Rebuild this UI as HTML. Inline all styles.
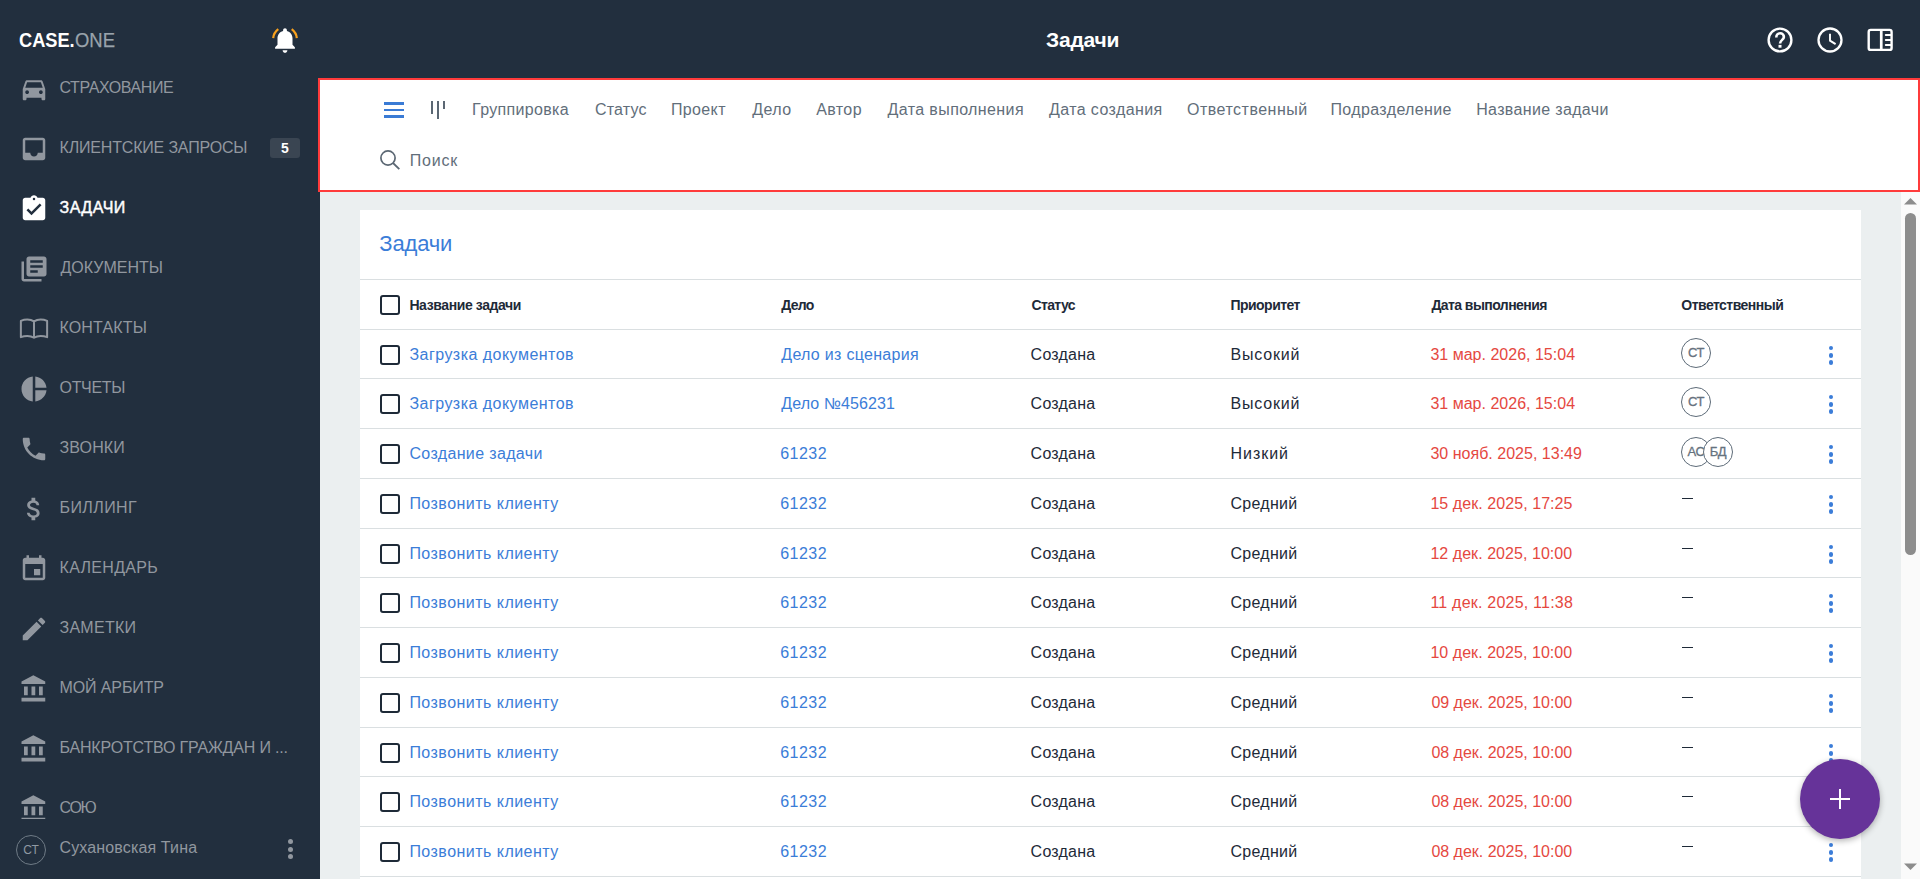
<!DOCTYPE html>
<html><head><meta charset="utf-8"><style>
html,body{margin:0;padding:0}
body{width:1920px;height:879px;overflow:hidden;position:relative;background:#ebeff0;font-family:"Liberation Sans",sans-serif}
.t{position:absolute;white-space:nowrap;line-height:1}
.ic{position:absolute;width:30px;height:30px}
.ic svg{display:block}
.cb{position:absolute;left:380px;width:16px;height:16px;border:2px solid #1e2a38;border-radius:3px}
.av{position:absolute;width:28px;height:28px;border:1px solid #5d6b78;border-radius:50%;background:#fff;color:#66727e;font-size:13px;font-weight:400;line-height:28px;text-align:center;letter-spacing:-0.4px;-webkit-text-stroke:0.3px #66727e}
.keb{position:absolute;left:1828.8px;width:5px;height:20px}
.keb i{display:block;width:4.6px;height:4.6px;border-radius:50%;background:#3b7dd8;margin-bottom:2.9px}
</style></head><body>
<div style="position:absolute;left:0;top:0;width:320px;height:879px;background:#222f3e"></div>
<div style="position:absolute;left:320px;top:0;width:1600px;height:80px;background:#222f3e"></div>
<div style="position:absolute;left:318px;top:78px;width:1598px;height:110px;border:2px solid #ff3b3b;background:#fff"></div>
<div style="position:absolute;left:1901px;top:192px;width:19px;height:687px;background:#fafafa"></div>
<div style="position:absolute;left:1905px;top:213px;width:11px;height:342px;border-radius:6px;background:#8c8c8c"></div>
<svg style="position:absolute;left:1904px;top:197px" width="13" height="8"><path d="M0 7.5L6.5 1 13 7.5z" fill="#8c8c8c"/></svg>
<svg style="position:absolute;left:1904px;top:863px" width="13" height="8"><path d="M0 .5L6.5 7 13 .5z" fill="#8c8c8c"/></svg>
<div style="position:absolute;left:360px;top:210px;width:1501px;height:700px;background:#fff"></div>
<div style="position:absolute;left:360px;top:279px;width:1501px;height:1px;background:#dadfe1"></div><div style="position:absolute;left:360px;top:329px;width:1501px;height:1px;background:#dadfe1"></div><div class="cb" style="top:295px"></div><div style="position:absolute;left:360px;top:378px;width:1501px;height:1px;background:#dadfe1"></div><div class="cb" style="top:345px"></div><div class="av" style="left:1681px;top:338px">СТ</div><div class="keb" style="top:345.50px"><i></i><i></i><i></i></div><div style="position:absolute;left:360px;top:428px;width:1501px;height:1px;background:#dadfe1"></div><div class="cb" style="top:394px"></div><div class="av" style="left:1681px;top:387px">СТ</div><div class="keb" style="top:394.50px"><i></i><i></i><i></i></div><div style="position:absolute;left:360px;top:478px;width:1501px;height:1px;background:#dadfe1"></div><div class="cb" style="top:444px"></div><div class="av" style="left:1681px;top:437px">АС</div><div class="av" style="left:1703px;top:437px">БД</div><div class="keb" style="top:444.50px"><i></i><i></i><i></i></div><div style="position:absolute;left:360px;top:528px;width:1501px;height:1px;background:#dadfe1"></div><div class="cb" style="top:494px"></div><div style="position:absolute;left:1682px;top:498px;width:11px;height:1px;background:#1e2a38"></div><div class="keb" style="top:494.50px"><i></i><i></i><i></i></div><div style="position:absolute;left:360px;top:577px;width:1501px;height:1px;background:#dadfe1"></div><div class="cb" style="top:544px"></div><div style="position:absolute;left:1682px;top:548px;width:11px;height:1px;background:#1e2a38"></div><div class="keb" style="top:544.50px"><i></i><i></i><i></i></div><div style="position:absolute;left:360px;top:627px;width:1501px;height:1px;background:#dadfe1"></div><div class="cb" style="top:593px"></div><div style="position:absolute;left:1682px;top:597px;width:11px;height:1px;background:#1e2a38"></div><div class="keb" style="top:593.50px"><i></i><i></i><i></i></div><div style="position:absolute;left:360px;top:677px;width:1501px;height:1px;background:#dadfe1"></div><div class="cb" style="top:643px"></div><div style="position:absolute;left:1682px;top:647px;width:11px;height:1px;background:#1e2a38"></div><div class="keb" style="top:643.50px"><i></i><i></i><i></i></div><div style="position:absolute;left:360px;top:727px;width:1501px;height:1px;background:#dadfe1"></div><div class="cb" style="top:693px"></div><div style="position:absolute;left:1682px;top:697px;width:11px;height:1px;background:#1e2a38"></div><div class="keb" style="top:693.50px"><i></i><i></i><i></i></div><div style="position:absolute;left:360px;top:776px;width:1501px;height:1px;background:#dadfe1"></div><div class="cb" style="top:743px"></div><div style="position:absolute;left:1682px;top:747px;width:11px;height:1px;background:#1e2a38"></div><div class="keb" style="top:743.50px"><i></i><i></i><i></i></div><div style="position:absolute;left:360px;top:826px;width:1501px;height:1px;background:#dadfe1"></div><div class="cb" style="top:792px"></div><div style="position:absolute;left:1682px;top:796px;width:11px;height:1px;background:#1e2a38"></div><div class="keb" style="top:792.50px"><i></i><i></i><i></i></div><div style="position:absolute;left:360px;top:876px;width:1501px;height:1px;background:#dadfe1"></div><div class="cb" style="top:842px"></div><div style="position:absolute;left:1682px;top:846px;width:11px;height:1px;background:#1e2a38"></div><div class="keb" style="top:842.50px"><i></i><i></i><i></i></div>
<svg style="position:absolute;left:268px;top:24px" width="34" height="32" viewBox="268 24 34 32">
<path d="M285 28.2c-1.1 0-1.9.8-1.9 1.9v.9c-3.6.9-5.6 3.9-5.6 7.4v6.3l-2.4 2.5v1.6h19.8v-1.6l-2.4-2.5v-6.3c0-3.5-2-6.5-5.6-7.4v-.9c0-1.1-.8-1.9-1.9-1.9z" fill="#fff"/>
<path d="M282.6 50.2h4.8c0 1.4-1.1 2.6-2.4 2.6s-2.4-1.2-2.4-2.6z" fill="#fff"/>
<path d="M278.3 29.2c-2.9 2.2-4.8 5.4-5.1 8.9" fill="none" stroke="#f7a01d" stroke-width="2.2"/>
<path d="M291.7 29.2c2.9 2.2 4.8 5.4 5.1 8.9" fill="none" stroke="#f7a01d" stroke-width="2.2"/>
</svg>
<svg style="position:absolute;left:1760px;top:20px" width="140" height="40" viewBox="1760 20 140 40">
<circle cx="1780" cy="40" r="11.4" fill="none" stroke="#fff" stroke-width="2.4"/>
<path d="M1776.3 37.4c0-2.4 1.6-4.1 3.8-4.1s3.8 1.6 3.8 3.7c0 2.8-3.8 3.1-3.8 6.5" fill="none" stroke="#fff" stroke-width="2.6"/>
<rect x="1778.5" y="44.9" width="3" height="2.8" fill="#fff"/>
<circle cx="1830" cy="40" r="11.5" fill="none" stroke="#fff" stroke-width="2.3"/>
<path d="M1830 33.8v6.8l5.6 3.5" fill="none" stroke="#fff" stroke-width="1.9"/>
<rect x="1868.7" y="29.9" width="22.9" height="20" rx="2" fill="none" stroke="#fff" stroke-width="2.4"/>
<rect x="1879.9" y="30" width="2.7" height="20" fill="#fff"/>
<path d="M1885.8 34.9h5M1885.8 39.9h5M1885.8 44.9h5" stroke="#fff" stroke-width="2" stroke-linecap="round"/>
</svg>
<div style="position:absolute;left:384px;top:102.3px;width:20px;height:2.5px;background:#3a7bd5"></div>
<div style="position:absolute;left:384px;top:108.9px;width:20px;height:2.5px;background:#3a7bd5"></div>
<div style="position:absolute;left:384px;top:115.3px;width:20px;height:2.5px;background:#3a7bd5"></div>
<div style="position:absolute;left:430.5px;top:101px;width:2.3px;height:12.6px;background:#5b6773"></div>
<div style="position:absolute;left:436.7px;top:101px;width:2.3px;height:17.6px;background:#5b6773"></div>
<div style="position:absolute;left:443.2px;top:101px;width:2.3px;height:7.6px;background:#5b6773"></div>
<svg style="position:absolute;left:376px;top:146px" width="28" height="28" viewBox="376 146 28 28">
<circle cx="388" cy="158" r="7.1" fill="none" stroke="#5b6773" stroke-width="1.7"/>
<path d="M393 163l6.3 6.2" stroke="#5b6773" stroke-width="1.8"/>
</svg>

<div class="ic" style="left:19px;top:74px"><svg width="30" height="30" viewBox="0 0 24 24"><path d="M18.92 6.01C18.72 5.42 18.16 5 17.5 5h-11c-.66 0-1.21.42-1.42 1.01L3 12v8c0 .55.45 1 1 1h1c.55 0 1-.45 1-1v-1h12v1c0 .55.45 1 1 1h1c.55 0 1-.45 1-1v-8l-2.08-5.99zM6.5 16c-.83 0-1.5-.67-1.5-1.5S5.67 13 6.5 13s1.5.67 1.5 1.5S7.33 16 6.5 16zm11 0c-.83 0-1.5-.67-1.5-1.5s.67-1.5 1.5-1.5 1.5.67 1.5 1.5-.67 1.5-1.5 1.5zM5 11l1.5-4.5h11L19 11H5z" fill="#91979f"/></svg></div><div class="ic" style="left:19px;top:134px"><svg width="30" height="30" viewBox="0 0 24 24"><path d="M19 3H4.99c-1.11 0-1.98.89-1.98 2L3 19c0 1.1.88 2 1.99 2H19c1.1 0 2-.9 2-2V5c0-1.11-.9-2-2-2zm0 12h-4c0 1.66-1.35 3-3 3s-3-1.34-3-3H4.99V5H19v10z" fill="#91979f"/></svg></div><div class="ic" style="left:19px;top:194px"><svg width="30" height="30" viewBox="0 0 24 24"><path d="M19 3h-4.18C14.4 1.84 13.3 1 12 1c-1.3 0-2.4.84-2.82 2H5c-1.1 0-2 .9-2 2v14c0 1.1.9 2 2 2h14c1.1 0 2-.9 2-2V5c0-1.1-.9-2-2-2z" fill="#fff"/><circle cx="12" cy="4" r="1" fill="#222f3e"/><path d="M10 17l-4-4 1.41-1.41L10 14.17l6.59-6.59L18 9l-8 8z" fill="#222f3e"/></svg></div><div class="ic" style="left:19px;top:254px"><svg width="30" height="30" viewBox="0 0 24 24"><path d="M4 6H2v14c0 1.1.9 2 2 2h14v-2H4V6zm16-4H8c-1.1 0-2 .9-2 2v12c0 1.1.9 2 2 2h12c1.1 0 2-.9 2-2V4c0-1.1-.9-2-2-2zm-1 9H9V9h10v2zm-4 4H9v-2h6v2zm4-8H9V5h10v2z" fill="#91979f"/></svg></div><div class="ic" style="left:19px;top:314px"><svg width="30" height="30" viewBox="0 0 24 24"><path d="M1.5 5.5c2-.9 4-1.1 5.2-1.1 1.9 0 3.8.5 5.3 1.5 1.5-1 3.4-1.5 5.3-1.5 1.2 0 3.2.2 5.2 1.1v13c-1.7-.7-3.5-1-5.2-1-1.9 0-3.8.5-5.3 1.5-1.5-1-3.4-1.5-5.3-1.5-1.7 0-3.5.3-5.2 1z M12 5.9v12.6" fill="none" stroke="#91979f" stroke-width="1.6" stroke-linejoin="round"/></svg></div><div class="ic" style="left:19px;top:374px"><svg width="30" height="30" viewBox="0 0 24 24"><path d="M11 2v20c-5.07-.5-9-4.79-9-10s3.93-9.5 9-10zm2.03 0v8.99H22c-.47-4.74-4.24-8.52-8.97-8.99zm0 11.01V22c4.74-.47 8.5-4.25 8.97-8.99h-8.97z" fill="#91979f"/></svg></div><div class="ic" style="left:19px;top:434px"><svg width="30" height="30" viewBox="0 0 24 24"><path d="M6.62 10.79c1.44 2.83 3.76 5.14 6.59 6.59l2.2-2.2c.27-.27.67-.36 1.02-.24 1.12.37 2.33.57 3.57.57.55 0 1 .45 1 1V20c0 .55-.45 1-1 1-9.39 0-17-7.61-17-17 0-.55.45-1 1-1h3.5c.55 0 1 .45 1 1 0 1.25.2 2.45.57 3.57.11.35.03.74-.25 1.02l-2.2 2.2z" fill="#91979f"/></svg></div><div class="ic" style="left:19px;top:494px"><svg width="30" height="30" viewBox="0 0 24 24"><path d="M11.8 10.9c-2.27-.59-3-1.2-3-2.15 0-1.09 1.01-1.85 2.7-1.85 1.78 0 2.44.85 2.5 2.1h2.21c-.07-1.72-1.12-3.3-3.21-3.81V3h-3v2.16c-1.94.42-3.5 1.68-3.5 3.61 0 2.310 1.91 3.46 4.7 4.13 2.5.6 3 1.48 3 2.41 0 .69-.49 1.79-2.7 1.79-2.06 0-2.87-.92-2.98-2.1h-2.2c.12 2.19 1.76 3.42 3.68 3.83V21h3v-2.15c1.95-.37 3.5-1.5 3.5-3.55 0-2.84-2.43-3.81-4.7-4.4z" fill="#91979f"/></svg></div><div class="ic" style="left:19px;top:554px"><svg width="30" height="30" viewBox="0 0 24 24"><path d="M17 12h-5v5h5v-5zM16 1v2H8V1H6v2H5c-1.11 0-1.990.9-1.99 2L3 19c0 1.1.89 2 2 2h14c1.1 0 2-.9 2-2V5c0-1.1-.9-2-2-2h-1V1h-2zm3 18H5V8h14v11z" fill="#91979f"/></svg></div><div class="ic" style="left:19px;top:614px"><svg width="30" height="30" viewBox="0 0 24 24"><path d="M3 17.25V21h3.75L17.81 9.94l-3.75-3.75L3 17.25zM20.71 7.04c.39-.39.39-1.02 0-1.41l-2.34-2.34c-.39-.39-1.02-.39-1.41 0l-1.83 1.83 3.75 3.75 1.83-1.83z" fill="#91979f"/></svg></div><div class="ic" style="left:19px;top:674px"><svg width="30" height="30" viewBox="0 0 24 24"><path d="M4 10v7h3v-7H4zm6 0v7h3v-7h-3zM2 22h19v-3H2v3zm14-12v7h3v-7h-3zm-4.5-9L2 6v2h19V6l-9.5-5z" fill="#91979f"/></svg></div><div class="ic" style="left:19px;top:734px"><svg width="30" height="30" viewBox="0 0 24 24"><path d="M4 10v7h3v-7H4zm6 0v7h3v-7h-3zM2 22h19v-3H2v3zm14-12v7h3v-7h-3zm-4.5-9L2 6v2h19V6l-9.5-5z" fill="#91979f"/></svg></div><div class="ic" style="left:19px;top:794px"><svg width="30" height="30" viewBox="0 0 24 24"><path d="M4 10v7h3v-7H4zm6 0v7h3v-7h-3zM2 22h19v-3H2v3zm14-12v7h3v-7h-3zm-4.5-9L2 6v2h19V6l-9.5-5z" fill="#91979f"/></svg></div>
<div style="position:absolute;left:0;top:819px;width:320px;height:60px;background:#222f3e"></div>
<div class="t" style="left:19.39px;top:30px;font-size:20px;font-weight:700;color:#ffffff;transform:scaleX(0.9102);transform-origin:0 0;">CASE.</div><div class="t" style="left:75.08px;top:30px;font-size:20px;font-weight:400;color:#9aa3ab;transform:scaleX(0.9214);transform-origin:0 0;-webkit-text-stroke:0.25px #9aa3ab;">ONE</div><div class="t" style="left:59.50px;top:80px;font-size:16px;font-weight:400;color:#91979f;letter-spacing:-0.400px;">СТРАХОВАНИЕ</div><div class="t" style="left:59.50px;top:140px;font-size:16px;font-weight:400;color:#91979f;letter-spacing:-0.176px;">КЛИЕНТСКИЕ ЗАПРОСЫ</div><div class="t" style="left:59.50px;top:200px;font-size:16px;font-weight:400;color:#ffffff;letter-spacing:0.500px;-webkit-text-stroke:0.45px #fff;">ЗАДАЧИ</div><div class="t" style="left:60.50px;top:260px;font-size:16px;font-weight:400;color:#91979f;letter-spacing:0.000px;">ДОКУМЕНТЫ</div><div class="t" style="left:59.50px;top:320px;font-size:16px;font-weight:400;color:#91979f;letter-spacing:0.143px;">КОНТАКТЫ</div><div class="t" style="left:59.50px;top:380px;font-size:16px;font-weight:400;color:#91979f;letter-spacing:-0.320px;">ОТЧЕТЫ</div><div class="t" style="left:59.50px;top:440px;font-size:16px;font-weight:400;color:#91979f;letter-spacing:0.140px;">ЗВОНКИ</div><div class="t" style="left:59.50px;top:500px;font-size:16px;font-weight:400;color:#91979f;letter-spacing:0.417px;">БИЛЛИНГ</div><div class="t" style="left:59.50px;top:560px;font-size:16px;font-weight:400;color:#91979f;letter-spacing:0.312px;">КАЛЕНДАРЬ</div><div class="t" style="left:59.50px;top:620px;font-size:16px;font-weight:400;color:#91979f;letter-spacing:0.267px;">ЗАМЕТКИ</div><div class="t" style="left:59.50px;top:680px;font-size:16px;font-weight:400;color:#91979f;letter-spacing:-0.111px;">МОЙ АРБИТР</div><div class="t" style="left:59.50px;top:740px;font-size:16px;font-weight:400;color:#91979f;letter-spacing:-0.167px;">БАНКРОТСТВО ГРАЖДАН И ...</div><div class="t" style="left:59.50px;top:800px;font-size:16px;font-weight:400;color:#91979f;letter-spacing:-1.300px;">СОЮ</div><div class="t" style="left:59.50px;top:840px;font-size:16px;font-weight:400;color:#91979f;letter-spacing:0.140px;">Сухановская Тина</div><div class="t" style="left:1046.10px;top:29px;font-size:21px;font-weight:700;color:#ffffff;letter-spacing:-0.220px;">Задачи</div><div class="t" style="left:472.10px;top:102px;font-size:16px;font-weight:400;color:#626e7a;letter-spacing:0.330px;">Группировка</div><div class="t" style="left:595.00px;top:102px;font-size:16px;font-weight:400;color:#626e7a;letter-spacing:0.200px;">Статус</div><div class="t" style="left:670.90px;top:102px;font-size:16px;font-weight:400;color:#626e7a;letter-spacing:0.380px;">Проект</div><div class="t" style="left:752.30px;top:102px;font-size:16px;font-weight:400;color:#626e7a;letter-spacing:0.400px;">Дело</div><div class="t" style="left:816.20px;top:102px;font-size:16px;font-weight:400;color:#626e7a;letter-spacing:0.400px;">Автор</div><div class="t" style="left:887.50px;top:102px;font-size:16px;font-weight:400;color:#626e7a;letter-spacing:0.393px;">Дата выполнения</div><div class="t" style="left:1049.00px;top:102px;font-size:16px;font-weight:400;color:#626e7a;letter-spacing:0.400px;">Дата создания</div><div class="t" style="left:1187.00px;top:102px;font-size:16px;font-weight:400;color:#626e7a;letter-spacing:0.492px;">Ответственный</div><div class="t" style="left:1330.50px;top:102px;font-size:16px;font-weight:400;color:#626e7a;letter-spacing:0.367px;">Подразделение</div><div class="t" style="left:1476.20px;top:102px;font-size:16px;font-weight:400;color:#626e7a;letter-spacing:0.343px;">Название задачи</div><div class="t" style="left:409.70px;top:153px;font-size:16px;font-weight:400;color:#626e7a;letter-spacing:0.825px;">Поиск</div><div class="t" style="left:379.30px;top:233px;font-size:22px;font-weight:400;color:#3b7dd8;letter-spacing:-0.160px;">Задачи</div><div class="t" style="left:409.40px;top:298px;font-size:14px;font-weight:700;color:#1e2a38;letter-spacing:-0.400px;">Название задачи</div><div class="t" style="left:781.25px;top:298px;font-size:14px;font-weight:700;color:#1e2a38;letter-spacing:-0.750px;">Дело</div><div class="t" style="left:1031.60px;top:298px;font-size:14px;font-weight:700;color:#1e2a38;letter-spacing:-0.660px;">Статус</div><div class="t" style="left:1230.50px;top:298px;font-size:14px;font-weight:700;color:#1e2a38;letter-spacing:-0.537px;">Приоритет</div><div class="t" style="left:1431.40px;top:298px;font-size:14px;font-weight:700;color:#1e2a38;letter-spacing:-0.564px;">Дата выполнения</div><div class="t" style="left:1681.30px;top:298px;font-size:14px;font-weight:700;color:#1e2a38;letter-spacing:-0.525px;">Ответственный</div><div class="t" style="left:409.40px;top:347px;font-size:16px;font-weight:400;color:#3b7dd8;letter-spacing:0.472px;">Загрузка документов</div><div class="t" style="left:781.25px;top:347px;font-size:16px;font-weight:400;color:#3b7dd8;letter-spacing:0.300px;">Дело из сценария</div><div class="t" style="left:1030.60px;top:347px;font-size:16px;font-weight:400;color:#1e2a38;letter-spacing:0.233px;">Создана</div><div class="t" style="left:1230.50px;top:347px;font-size:16px;font-weight:400;color:#1e2a38;letter-spacing:0.783px;">Высокий</div><div class="t" style="left:1430.40px;top:347px;font-size:16px;font-weight:400;color:#e5483f;letter-spacing:0.011px;">31 мар. 2026, 15:04</div><div class="t" style="left:409.40px;top:396px;font-size:16px;font-weight:400;color:#3b7dd8;letter-spacing:0.472px;">Загрузка документов</div><div class="t" style="left:781.25px;top:396px;font-size:16px;font-weight:400;color:#3b7dd8;letter-spacing:0.091px;">Дело №456231</div><div class="t" style="left:1030.60px;top:396px;font-size:16px;font-weight:400;color:#1e2a38;letter-spacing:0.233px;">Создана</div><div class="t" style="left:1230.50px;top:396px;font-size:16px;font-weight:400;color:#1e2a38;letter-spacing:0.783px;">Высокий</div><div class="t" style="left:1430.40px;top:396px;font-size:16px;font-weight:400;color:#e5483f;letter-spacing:0.011px;">31 мар. 2026, 15:04</div><div class="t" style="left:409.40px;top:446px;font-size:16px;font-weight:400;color:#3b7dd8;letter-spacing:0.357px;">Создание задачи</div><div class="t" style="left:780.25px;top:446px;font-size:16px;font-weight:400;color:#3b7dd8;letter-spacing:0.450px;">61232</div><div class="t" style="left:1030.60px;top:446px;font-size:16px;font-weight:400;color:#1e2a38;letter-spacing:0.233px;">Создана</div><div class="t" style="left:1230.50px;top:446px;font-size:16px;font-weight:400;color:#1e2a38;letter-spacing:0.960px;">Низкий</div><div class="t" style="left:1430.40px;top:446px;font-size:16px;font-weight:400;color:#e5483f;letter-spacing:0.016px;">30 нояб. 2025, 13:49</div><div class="t" style="left:409.40px;top:496px;font-size:16px;font-weight:400;color:#3b7dd8;letter-spacing:0.469px;">Позвонить клиенту</div><div class="t" style="left:780.25px;top:496px;font-size:16px;font-weight:400;color:#3b7dd8;letter-spacing:0.450px;">61232</div><div class="t" style="left:1030.60px;top:496px;font-size:16px;font-weight:400;color:#1e2a38;letter-spacing:0.233px;">Создана</div><div class="t" style="left:1230.50px;top:496px;font-size:16px;font-weight:400;color:#1e2a38;letter-spacing:0.283px;">Средний</div><div class="t" style="left:1430.40px;top:496px;font-size:16px;font-weight:400;color:#e5483f;letter-spacing:0.067px;">15 дек. 2025, 17:25</div><div class="t" style="left:409.40px;top:546px;font-size:16px;font-weight:400;color:#3b7dd8;letter-spacing:0.469px;">Позвонить клиенту</div><div class="t" style="left:780.25px;top:546px;font-size:16px;font-weight:400;color:#3b7dd8;letter-spacing:0.450px;">61232</div><div class="t" style="left:1030.60px;top:546px;font-size:16px;font-weight:400;color:#1e2a38;letter-spacing:0.233px;">Создана</div><div class="t" style="left:1230.50px;top:546px;font-size:16px;font-weight:400;color:#1e2a38;letter-spacing:0.283px;">Средний</div><div class="t" style="left:1430.40px;top:546px;font-size:16px;font-weight:400;color:#e5483f;letter-spacing:0.050px;">12 дек. 2025, 10:00</div><div class="t" style="left:409.40px;top:595px;font-size:16px;font-weight:400;color:#3b7dd8;letter-spacing:0.469px;">Позвонить клиенту</div><div class="t" style="left:780.25px;top:595px;font-size:16px;font-weight:400;color:#3b7dd8;letter-spacing:0.450px;">61232</div><div class="t" style="left:1030.60px;top:595px;font-size:16px;font-weight:400;color:#1e2a38;letter-spacing:0.233px;">Создана</div><div class="t" style="left:1230.50px;top:595px;font-size:16px;font-weight:400;color:#1e2a38;letter-spacing:0.283px;">Средний</div><div class="t" style="left:1430.40px;top:595px;font-size:16px;font-weight:400;color:#e5483f;letter-spacing:0.217px;">11 дек. 2025, 11:38</div><div class="t" style="left:409.40px;top:645px;font-size:16px;font-weight:400;color:#3b7dd8;letter-spacing:0.469px;">Позвонить клиенту</div><div class="t" style="left:780.25px;top:645px;font-size:16px;font-weight:400;color:#3b7dd8;letter-spacing:0.450px;">61232</div><div class="t" style="left:1030.60px;top:645px;font-size:16px;font-weight:400;color:#1e2a38;letter-spacing:0.233px;">Создана</div><div class="t" style="left:1230.50px;top:645px;font-size:16px;font-weight:400;color:#1e2a38;letter-spacing:0.283px;">Средний</div><div class="t" style="left:1430.40px;top:645px;font-size:16px;font-weight:400;color:#e5483f;letter-spacing:0.050px;">10 дек. 2025, 10:00</div><div class="t" style="left:409.40px;top:695px;font-size:16px;font-weight:400;color:#3b7dd8;letter-spacing:0.469px;">Позвонить клиенту</div><div class="t" style="left:780.25px;top:695px;font-size:16px;font-weight:400;color:#3b7dd8;letter-spacing:0.450px;">61232</div><div class="t" style="left:1030.60px;top:695px;font-size:16px;font-weight:400;color:#1e2a38;letter-spacing:0.233px;">Создана</div><div class="t" style="left:1230.50px;top:695px;font-size:16px;font-weight:400;color:#1e2a38;letter-spacing:0.283px;">Средний</div><div class="t" style="left:1431.40px;top:695px;font-size:16px;font-weight:400;color:#e5483f;letter-spacing:-0.006px;">09 дек. 2025, 10:00</div><div class="t" style="left:409.40px;top:745px;font-size:16px;font-weight:400;color:#3b7dd8;letter-spacing:0.469px;">Позвонить клиенту</div><div class="t" style="left:780.25px;top:745px;font-size:16px;font-weight:400;color:#3b7dd8;letter-spacing:0.450px;">61232</div><div class="t" style="left:1030.60px;top:745px;font-size:16px;font-weight:400;color:#1e2a38;letter-spacing:0.233px;">Создана</div><div class="t" style="left:1230.50px;top:745px;font-size:16px;font-weight:400;color:#1e2a38;letter-spacing:0.283px;">Средний</div><div class="t" style="left:1431.40px;top:745px;font-size:16px;font-weight:400;color:#e5483f;letter-spacing:-0.006px;">08 дек. 2025, 10:00</div><div class="t" style="left:409.40px;top:794px;font-size:16px;font-weight:400;color:#3b7dd8;letter-spacing:0.469px;">Позвонить клиенту</div><div class="t" style="left:780.25px;top:794px;font-size:16px;font-weight:400;color:#3b7dd8;letter-spacing:0.450px;">61232</div><div class="t" style="left:1030.60px;top:794px;font-size:16px;font-weight:400;color:#1e2a38;letter-spacing:0.233px;">Создана</div><div class="t" style="left:1230.50px;top:794px;font-size:16px;font-weight:400;color:#1e2a38;letter-spacing:0.283px;">Средний</div><div class="t" style="left:1431.40px;top:794px;font-size:16px;font-weight:400;color:#e5483f;letter-spacing:-0.006px;">08 дек. 2025, 10:00</div><div class="t" style="left:409.40px;top:844px;font-size:16px;font-weight:400;color:#3b7dd8;letter-spacing:0.469px;">Позвонить клиенту</div><div class="t" style="left:780.25px;top:844px;font-size:16px;font-weight:400;color:#3b7dd8;letter-spacing:0.450px;">61232</div><div class="t" style="left:1030.60px;top:844px;font-size:16px;font-weight:400;color:#1e2a38;letter-spacing:0.233px;">Создана</div><div class="t" style="left:1230.50px;top:844px;font-size:16px;font-weight:400;color:#1e2a38;letter-spacing:0.283px;">Средний</div><div class="t" style="left:1431.40px;top:844px;font-size:16px;font-weight:400;color:#e5483f;letter-spacing:-0.006px;">08 дек. 2025, 10:00</div>
<div style="position:absolute;left:270px;top:138px;width:30px;height:20px;background:#3a4552;border-radius:3px;color:#fff;font-size:14px;font-weight:700;text-align:center;line-height:20px">5</div>
<div style="position:absolute;left:16px;top:835px;width:28px;height:28px;border:1px solid #6f7b86;border-radius:50%;color:#8f99a3;font-size:12px;line-height:29px;text-align:center">СТ</div>
<div style="position:absolute;left:287.5px;top:839px;width:5px"><i style="display:block;width:5px;height:5px;border-radius:50%;background:#91979f;margin-bottom:2.5px"></i><i style="display:block;width:5px;height:5px;border-radius:50%;background:#91979f;margin-bottom:2.5px"></i><i style="display:block;width:5px;height:5px;border-radius:50%;background:#91979f"></i></div>
<div style="position:absolute;left:1800px;top:759px;width:80px;height:80px;border-radius:50%;background:#663399;box-shadow:0 2px 6px rgba(0,0,0,.3)"><div style="position:absolute;left:30px;top:39px;width:20px;height:2px;background:#fff"></div><div style="position:absolute;left:39px;top:30px;width:2px;height:20px;background:#fff"></div></div>
</body></html>
